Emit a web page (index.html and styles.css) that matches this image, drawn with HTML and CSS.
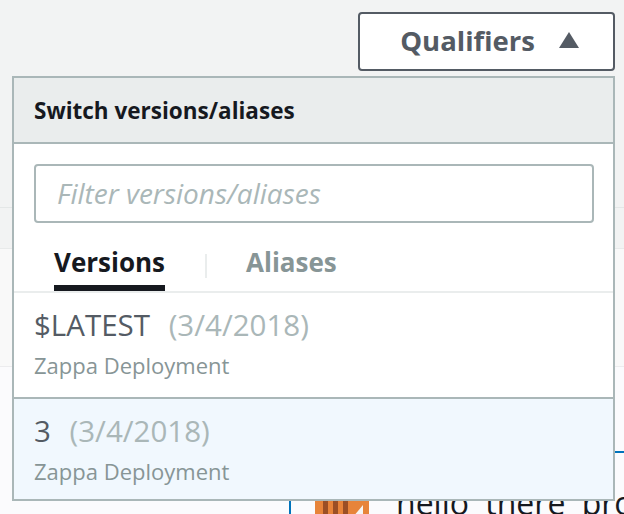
FILE: index.html
```html
<!DOCTYPE html>
<html>
<head>
<meta charset="utf-8">
<link rel="stylesheet" href="styles.css">
</head>
<body>
<div class="page">
  <div class="topbar">
    <button class="qual-btn">Qualifiers <span class="caret"></span></button>
  </div>
  <div class="band"></div>
  <div class="band2"></div>
  <div class="content">
    <div class="card">
      <svg class="fn-icon" width="54" height="40" viewBox="0 0 54 40">
        <rect x="0" y="0" width="54" height="40" fill="#e7843a"/>
        <rect x="8" y="0" width="5" height="40" fill="#9b4f25"/>
        <rect x="18" y="0" width="5" height="40" fill="#9b4f25"/>
        <rect x="28" y="0" width="5" height="40" fill="#9b4f25"/>
        <path d="M38 20 L48 8 L48 20 Z" fill="#f5f5f5"/>
      </svg>
      <span class="fn-name">hello there project</span>
    </div>
  </div>

  <div class="menu">
    <div class="menu-head">Switch versions/aliases</div>
    <div class="menu-filter">
      <div class="filter-box">Filter versions/aliases</div>
    </div>
    <div class="tabs">
      <div class="tab active">Versions</div>
      <div class="tab-sep"></div>
      <div class="tab">Aliases</div>
    </div>
    <div class="item">
      <div class="item-title">$LATEST <span class="date">(3/4/2018)</span></div>
      <div class="item-desc">Zappa Deployment</div>
    </div>
    <div class="item selected">
      <div class="item-title">3 <span class="date">(3/4/2018)</span></div>
      <div class="item-desc">Zappa Deployment</div>
    </div>
  </div>
</div>
</body>
</html>
```
FILE: styles.css
```css
* { box-sizing: border-box; }
html, body { margin: 0; padding: 0; }
body {
  font-family: "Open Sans", "Liberation Sans", sans-serif;
  background: #fbfbfd;
  width: 624px;
  height: 514px;
  overflow: hidden;
}
.page { position: relative; width: 624px; height: 514px; overflow: hidden; }
.topbar {
  height: 208px;
  background: #f2f3f3;
  border-bottom: 1px solid #e4e7e7;
  display: flex;
  justify-content: flex-end;
  align-items: flex-start;
  padding: 12px 9px 0 0;
}
.qual-btn {
  width: 257px;
  height: 59px;
  background: #fff;
  border: 2px solid #545b64;
  border-radius: 4px;
  font-family: inherit;
  font-weight: 700;
  font-size: 27.5px;
  color: #545b64;
  display: flex;
  align-items: center;
  justify-content: flex-end;
  padding: 0 34px 2px 0;
  gap: 24px;
}
.caret {
  width: 0; height: 0;
  border-left: 10px solid transparent;
  border-right: 10px solid transparent;
  border-bottom: 16px solid #545b64;
  margin-bottom: 2px;
}
.band { height: 41px; background: #f2f3f3; border-bottom: 1px solid #e8eaea; }
.band2 { height: 118px; background: #f9f9f9; border-bottom: 1px solid #ececee; }
.content { padding: 84px 0 0 289px; background: #fbfbfd; }
.card {
  border-top: 2px solid #0073bb;
  border-left: 2px solid #0073bb;
  height: 100px;
  display: flex;
  align-items: flex-start;
  padding: 44px 0 0 24px;
  gap: 27px;
}
.fn-icon { flex: none; }
.fn-name { font-size: 32px; word-spacing: 8px; color: #16191f; line-height: 1; margin-top: -10px; white-space: nowrap; }

.menu {
  position: absolute;
  left: 12px;
  top: 76px;
  width: 603px;
  height: 425px;
  background: #fff;
  border: 2px solid #aab7b8;
  display: flex;
  flex-direction: column;
}
.menu-head {
  height: 66px;
  background: #eaeded;
  border-bottom: 2px solid #aab7b8;
  padding: 0 20px;
  font-weight: 700;
  font-size: 22.5px;
  color: #16191f;
  display: flex;
  align-items: center;
}
.menu-filter { padding: 20px 19px 0 20px; }
.filter-box {
  height: 59px;
  border: 2px solid #aab7b8;
  border-radius: 4px;
  padding: 0 21px 2px;
  display: flex;
  align-items: center;
  font-style: italic;
  font-size: 28px;
  color: #aab7b8;
}
.tabs {
  height: 70px;
  border-bottom: 2px solid #eaeded;
  display: flex;
  align-items: flex-end;
  padding-left: 40px;
}
.tab {
  font-weight: 700;
  font-size: 26px;
  color: #879596;
  line-height: 1;
  padding-bottom: 16px;
}
.tab.active {
  color: #16191f;
  border-bottom: 6px solid #16191f;
  padding-bottom: 10px;
}
.tab-sep {
  width: 2px;
  height: 24px;
  background: #eaeded;
  margin: 0 39px 13px 40px;
}
.item {
  height: 104px;
  padding: 12px 20px 0;
}
.item.selected {
  background: #f1f8fe;
  border-top: 2px solid #aab7b8;
  flex: 1;
  padding-top: 12px;
}
.item-title { font-size: 29.5px; color: #545b64; line-height: 40px; }
.date { color: #aab7b8; margin-left: 11px; }
.item-desc { font-size: 22px; color: #879596; line-height: 28px; margin-top: 6px; }
```
